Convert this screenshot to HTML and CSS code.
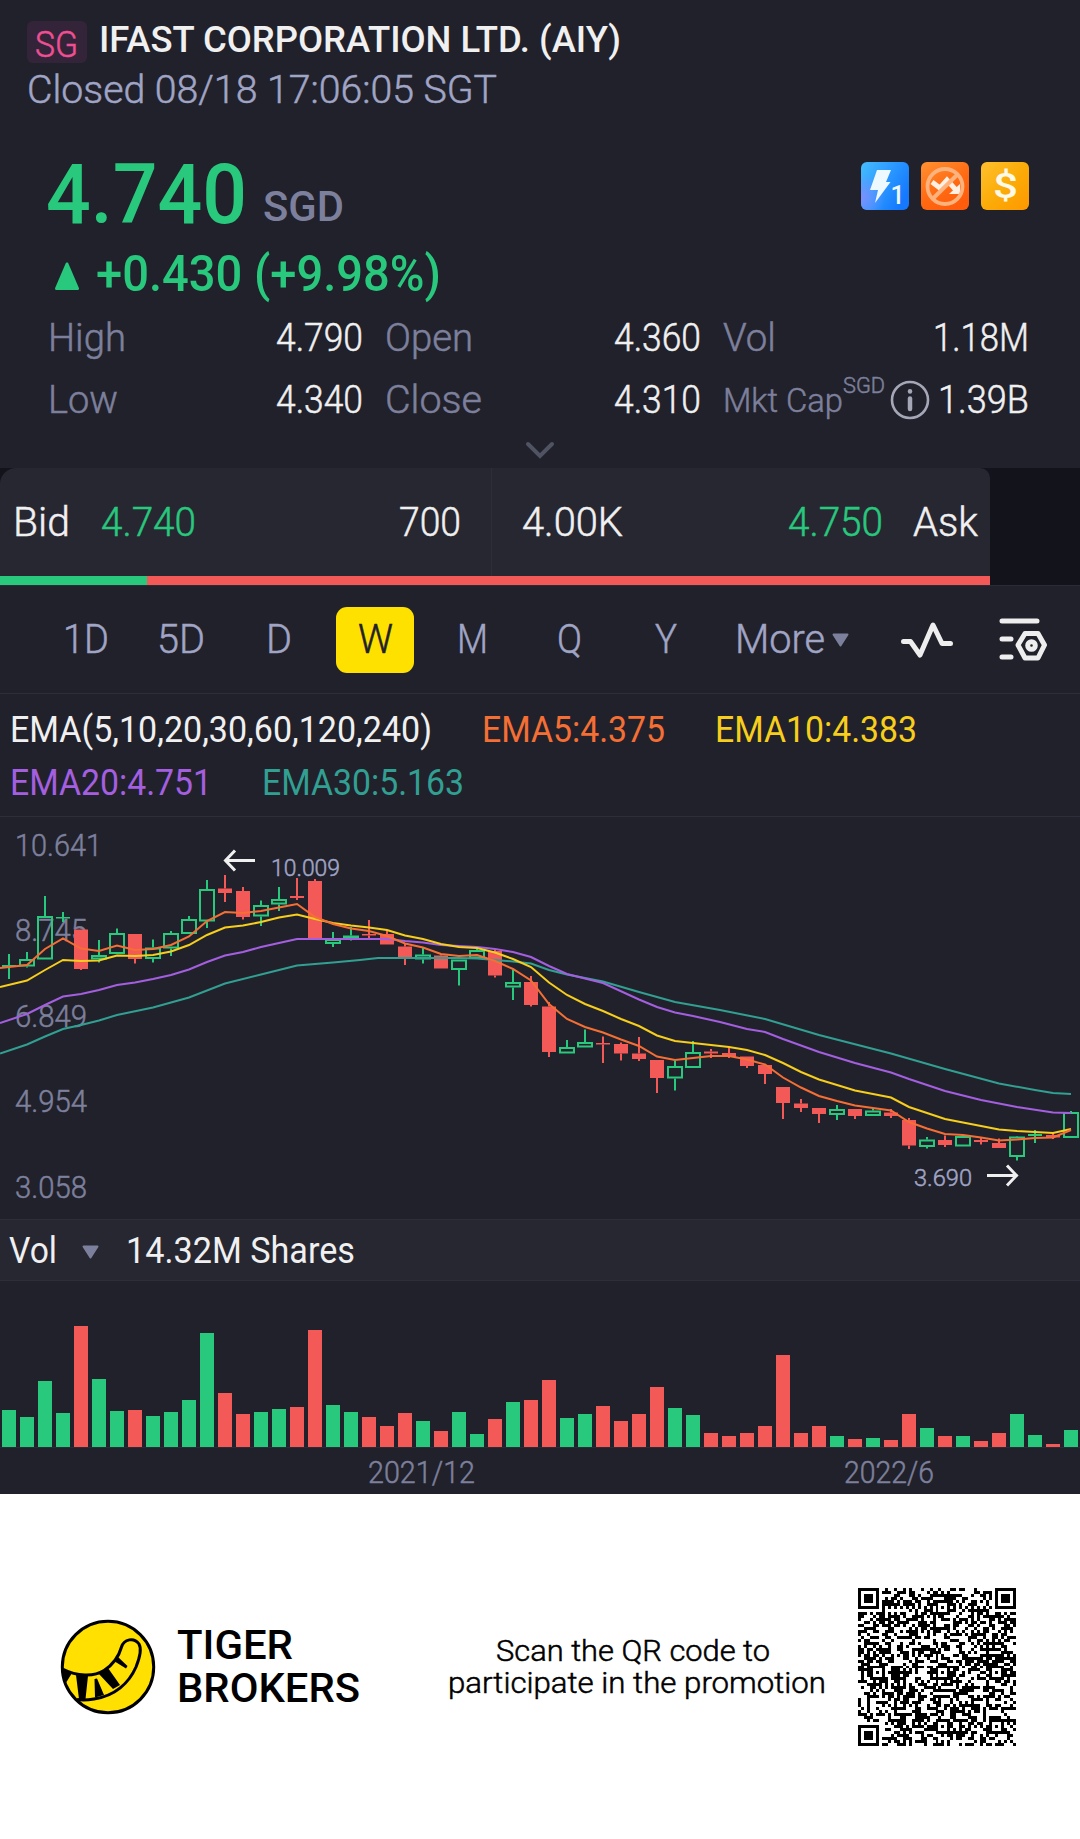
FILE: index.html
```html
<!DOCTYPE html>
<html lang="en">
<head>
<meta charset="utf-8">
<title>IFAST CORPORATION LTD. (AIY)</title>
<link rel="stylesheet" href="styles.css">
</head>
<body>
<main class="quote-page">
  <header class="head">
    <div class="head-title">
      <span class="market thin"><span class="fit" data-w="43">SG</span></span>
      <h1 class="name fit" data-w="522">IFAST CORPORATION LTD. (AIY)</h1>
    </div>
    <div class="status thin"><span class="fit" data-w="470">Closed 08/18 17:06:05 SGT</span></div>
  </header>

  <section class="price">
    <div class="price-row">
      <span class="last fit" data-w="201">4.740</span>
      <span class="ccy fit" data-w="81">SGD</span>
      <div class="tags">
        <svg class="tag" viewBox="0 0 48 48">
          <defs>
            <linearGradient id="blue" x1="0" y1="0" x2="1" y2=".6"><stop offset="0" stop-color="#46bdff"/><stop offset="1" stop-color="#1479ff"/></linearGradient>
            <radialGradient id="violet" cx="0" cy=".75" r=".5"><stop offset="0" stop-color="#7c8fff"/><stop offset="1" stop-color="#7c8fff" stop-opacity="0"/></radialGradient>
          </defs>
          <rect width="48" height="48" rx="6" fill="url(#blue)"/><rect width="48" height="48" rx="6" fill="url(#violet)"/>
          <path d="M16 8H30L25 20H29.500L14 41L17 28H9Z" fill="#eef8ff"/>
          <text class="tag-num" x="29.500" y="42">1</text>
        </svg>
        <svg class="tag" viewBox="0 0 48 48">
          <defs><linearGradient id="orange" x1="0" y1="0" x2=".6" y2="1"><stop offset="0" stop-color="#ff9232"/><stop offset=".6" stop-color="#ff6a12"/><stop offset="1" stop-color="#ff5d0c"/></linearGradient></defs>
          <rect width="48" height="48" rx="6" fill="url(#orange)"/>
          <path d="M11 20L19 26L26 18L35 28" fill="none" stroke="#fff0e3" stroke-width="5"/>
          <path d="M39 22V32H28Z" fill="#fff0e3"/>
          <path d="M11.500 37L37 12" stroke="#ffb27c" stroke-width="4"/>
          <circle cx="24" cy="24.500" r="17.500" fill="none" stroke="#ffb27c" stroke-width="3.800"/>
        </svg>
        <svg class="tag" viewBox="0 0 48 48">
          <defs><linearGradient id="gold" x1="0" y1="0" x2="1" y2="1"><stop offset="0" stop-color="#ffc12f"/><stop offset=".5" stop-color="#fbac08"/><stop offset="1" stop-color="#ff9800"/></linearGradient></defs>
          <rect width="48" height="48" rx="6" fill="url(#gold)"/>
          <text class="tag-dollar" x="24.500" y="36" textLength="25" lengthAdjust="spacingAndGlyphs">$</text>
        </svg>
      </div>
    </div>
    <div class="change">
      <svg class="up" viewBox="0 0 24 28"><path d="M12 2L22.500 26.500H1.500Z"/></svg>
      <span class="fit" data-w="345">+0.430 (+9.98%)</span>
    </div>
    <div class="stats thin">
      <div class="stat"><span class="label fit" data-w="78">High</span><span class="fit" data-w="87">4.790</span></div>
      <div class="stat"><span class="label fit" data-w="88">Open</span><span class="fit" data-w="87">4.360</span></div>
      <div class="stat"><span class="label fit" data-w="53">Vol</span><span class="fit" data-w="96">1.18M</span></div>
      <div class="stat"><span class="label fit" data-w="70">Low</span><span class="fit" data-w="87">4.340</span></div>
      <div class="stat"><span class="label fit" data-w="97">Close</span><span class="fit" data-w="87">4.310</span></div>
      <div class="stat">
        <span class="label cap"><span class="fit" data-w="120">Mkt Cap</span><span class="unit"><span class="fit" data-w="42">SGD</span></span></span>
        <svg class="info" viewBox="0 0 40 40"><circle cx="20" cy="20" r="18"/><path d="M20 18.500V29"/><path d="M20 11.200V11.400"/></svg>
        <span class="fit" data-w="91">1.39B</span>
      </div>
    </div>
    <svg class="chevron" viewBox="0 0 30 18"><path d="M3 3L15 15L27 3"/></svg>
  </section>

  <section class="book">
    <div class="book-panel">
      <div class="book-rows thin">
        <div class="side bid"><span class="fit" data-w="57">Bid</span><span class="green fit" data-w="95">4.740</span><span class="push fit" data-w="62">700</span></div>
        <div class="side ask"><span class="fit" data-w="101">4.00K</span><span class="green push fit" data-w="95">4.750</span><span class="fit" data-w="65">Ask</span></div>
      </div>
      <div class="depth"><i class="depth-bid"></i></div>
    </div>
  </section>

  <nav class="tabs thin">
    <span class="tab"><span class="fit" data-w="46">1D</span></span>
    <span class="tab"><span class="fit" data-w="48">5D</span></span>
    <span class="tab"><span class="fit" data-w="26">D</span></span>
    <span class="tab active"><span class="fit" data-w="35">W</span></span>
    <span class="tab"><span class="fit" data-w="31">M</span></span>
    <span class="tab"><span class="fit" data-w="25">Q</span></span>
    <span class="tab"><span class="fit" data-w="22">Y</span></span>
    <span class="tab more"><span class="fit" data-w="90">More</span><svg class="caret" viewBox="0 0 17 14"><path d="M1.500 1.500H15.500L8.500 12.500Z"/></svg></span>
    <svg class="tool wave" viewBox="0 0 52 38"><path d="M2.500 20.500H9.500L19 34L32 4L41 22.500H49.500"/></svg>
    <svg class="tool prefs" viewBox="0 0 48 46"><path d="M3 4H38M3 22H12M3 40H12"/><path d="M26 16.500H39L45.500 28L39 41H26L19 28Z"/><circle cx="32.500" cy="28.500" r="3.800"/></svg>
  </nav>

  <section class="ema">
    <div class="ema-row"><span class="fit" data-w="422">EMA(5,10,20,30,60,120,240)</span><span class="e5 fit" data-w="183">EMA5:4.375</span><span class="e10 fit" data-w="202">EMA10:4.383</span></div>
    <div class="ema-row"><span class="e20 fit" data-w="202">EMA20:4.751</span><span class="e30 fit" data-w="202">EMA30:5.163</span></div>
  </section>

  <section class="chart">
    <svg id="candles" viewBox="0 7 1080 402" width="1080" height="402"></svg>
  </section>

  <section class="vol-head"><span class="fit" data-w="48">Vol</span><svg class="caret" viewBox="0 0 17 14"><path d="M1.500 1.500H15.500L8.500 12.500Z"/></svg><span class="fit" data-w="229">14.32M Shares</span></section>
  <section class="volume" id="volume"></section>
  <div class="dates thin"><span class="fit" data-w="107">2021/12</span><span class="fit" data-w="90">2022/6</span></div>
</main>

<footer class="promo">
  <svg class="logo" viewBox="0 0 96 96">
    <circle cx="48" cy="48" r="45.700" fill="#ffe000" stroke="#000" stroke-width="3"/>
    <path d="M2.500 50C17 57.500 34 58 44 51.500C54 45 59 37 61.500 28C64 20 74 18 79 25C82 30 80 38 76 48C69 64 55 77 34 80C28 81 22 81.300 17 80.500" fill="none" stroke="#000" stroke-width="3"/>
    <path d="M2.500 50L12 54L6.500 63L3 59ZM16 56L28 57L25.500 80H19ZM34.500 60L37 59.500L44 76L35 78.500ZM39 55L48 49L60 66L53 70ZM54 42L58 38L67.500 47L66 49.500Z"/>
  </svg>
  <div class="brand"><span class="fit" data-w="116">TIGER</span><span class="fit" data-w="183">BROKERS</span></div>
  <div class="scan thin"><span class="scan-first fit" data-w="274">Scan the QR code to</span><span class="fit" data-w="378">participate in the promotion</span></div>
  <svg id="qr" class="qr" viewBox="0 0 53 53" shape-rendering="crispEdges"></svg>
</footer>
<script src="app.js"></script>
</body>
</html>
```
FILE: styles.css
```css
* { box-sizing: border-box; }
body { margin: 0; background: #fff; color: #f0f0f0; font-family: Roboto, "Liberation Sans", sans-serif; font-size: 39px; line-height: 40px; }
svg { display: block; flex: none; }
.quote-page { height: 1494px; background: #21212b; }
.fit { display: inline-block; flex: none; white-space: nowrap; }
.fit-in { display: inline-block; transform-origin: 0 50%; }
.thin { font-weight: 300; -webkit-text-stroke-width: .5px; }
.green { color: #28c87d; }
.push { margin-left: auto; }

.head { height: 152px; padding: 21px 27px 0; }
.head-title { display: flex; gap: 12px; height: 49px; }
.market { width: 60px; height: 42px; padding: 4px 0 0 8px; border-radius: 6px; background: #34243a; color: #f04f94; font-size: 36px; }
.name { margin: 0; font-size: 37px; font-weight: 500; line-height: 37px; }
.status { color: #a0a5c5; }

.price { height: 316px; padding: 0 51px 0 46px; }
.price-row { display: flex; align-items: center; height: 84px; }
.last { color: #28c87d; font-size: 84px; font-weight: 500; line-height: 88px; }
.last .fit-in { padding-top: 1px; }
.ccy { margin: 23px 0 0 16px; color: #7d809c; font-size: 43px; font-weight: 500; }
.tags { display: flex; gap: 12px; margin: -16px 0 0 auto; }
.tag { width: 48px; height: 48px; }
.tag-num { fill: #eef8ff; font-size: 25px; font-weight: 500; }
.tag-dollar { fill: #fff9e8; font-size: 35px; font-weight: 500; text-anchor: middle; }
.change { display: flex; align-items: center; gap: 17px; height: 71px; padding: 4px 0 0 9px; color: #28c87d; font-size: 50px; font-weight: 500; line-height: 60px; }
.up { width: 24px; height: 28px; margin-top: 5px; fill: #28c87d; stroke: #28c87d; stroke-width: 3; stroke-linejoin: round; }
.stats { display: grid; grid-template-columns: 315px 316px 306px; grid-auto-rows: 62px; column-gap: 22px; margin: 0 -1px 0 2px; }
.stat { display: flex; align-items: center; justify-content: space-between; font-size: 38px; }
.label { color: #7d809c; font-size: 39px; }
.cap { display: flex; font-size: 34px; }
.unit { font-size: 22px; line-height: 12px; }
.info { width: 40px; height: 40px; margin-left: -3px; fill: none; stroke: #a5a7b6; stroke-width: 2.6; }
.info path { stroke-width: 4.5; stroke-linecap: round; }
.chevron { width: 30px; height: 18px; margin: 10px auto 0; position: relative; left: 2px; fill: none; stroke: #505362; stroke-width: 4; stroke-linecap: round; }

.book { height: 118px; background: #13131c; border-bottom: 1px solid #2b2b38; }
.book-panel { width: 990px; height: 117px; border-radius: 16px 10px 0 0; background: #272732; overflow: hidden; }
.book-rows { display: grid; grid-template-columns: 492px 498px; height: 108px; }
.side { display: flex; align-items: center; padding-top: 2px; font-size: 40px; }
.bid { gap: 31px; padding-left: 13px; padding-right: 30px; border-right: 1px solid #2e2e3b; }
.ask { gap: 30px; padding-left: 30px; padding-right: 12px; }
.depth { height: 9px; background: #f25957; }
.depth-bid { display: block; width: 147px; height: 9px; background: #28c87d; }

.tabs { display: grid; grid-template-columns: 86px 104px 91px 102px 92px 102px 92px 160px 1fr auto; align-items: center; height: 108px; padding: 0 33px 0 43px; border-bottom: 1px solid #2e2e3b; color: #a0a5c5; font-size: 40px; }
.tab { display: flex; justify-content: center; }
.active { justify-self: center; align-items: center; width: 78px; height: 66px; border-radius: 11px; background: #ffe100; color: #21212b; }
.more { align-items: center; gap: 7px; }
.caret { width: 17px; height: 14px; fill: #7d809c; stroke: #7d809c; stroke-width: 2; stroke-linejoin: round; }
.tool { fill: none; stroke: #eee; stroke-width: 5; stroke-linecap: round; stroke-linejoin: round; }
.wave { width: 52px; height: 38px; margin-left: 29px; }
.prefs { width: 48px; height: 46px; }

.ema { height: 123px; padding: 10px 10px 0; border-bottom: 1px solid #2e2e3b; font-size: 36px; }
.ema-row { display: flex; gap: 50px; height: 53px; line-height: 53px; }
.e5 { color: #f56f34; } .e10 { color: #f6ce1b; } .e20 { color: #a45fe0; } .e30 { color: #319f91; }

.chart { height: 402px; }
.chart text { font-weight: 300; fill: #7d809c; stroke: #7d809c; stroke-width: .5; font-size: 31px; }
.chart .mark { fill: #a0a5c5; stroke: #a0a5c5; font-size: 24px; }
.line { fill: none; stroke-width: 2; }
.arrow { fill: none; stroke: #f0f0f0; stroke-width: 3; }

.vol-head { display: flex; align-items: center; height: 62px; padding: 2px 0 0 9px; background: #272732; border: solid #2e2e3b; border-width: 1px 0; font-size: 36px; }
.vol-head .caret { margin: 2px 27px 0 25px; }
.volume { display: flex; align-items: flex-end; gap: 4px; height: 167px; padding: 0 2px; border-bottom: 1px solid #2b2b38; }
.volume i { flex: none; width: 14px; }
.rise { background: #28c87d; } .fall { background: #f25957; }
.dates { display: flex; gap: 369px; height: 46px; padding: 5px 0 0 368px; color: #7d809c; font-size: 31px; }

.promo { display: flex; align-items: center; height: 345px; padding: 0 64px 0 60px; color: #000; }
.logo { width: 96px; height: 96px; }
.brand { display: flex; flex-direction: column; margin-left: 21px; font-size: 40px; font-weight: 500; line-height: 43px; }
.scan { display: flex; flex-direction: column; align-items: center; width: 378px; margin-left: 88px; font-size: 29px; line-height: 32px; }
.scan-first { margin-right: 8px; }
.qr { width: 158px; height: 158px; margin-left: auto; }
```
FILE: app.js
```js
// Condense each label to its column width.
document.querySelectorAll('.fit').forEach(function (el) {
  var inner = document.createElement('span');
  inner.className = 'fit-in';
  inner.textContent = el.textContent;
  el.textContent = '';
  el.appendChild(inner);
  var natural = inner.getBoundingClientRect().width;
  el.style.width = el.dataset.w + 'px';
  inner.style.transform = 'scaleX(' + el.dataset.w / natural + ')';
});

var GREEN = '#28c87d', RED = '#f25957';

// direction, high, body top, body bottom, low, volume
var weeks = [
['g',144,155,157,169,37],['g',142,149,156.5,157.5,30],['g',86,106,149.5,149.5,66],['g',102,107,108,112,34],['r',119.5,119.5,159,160,121],
['g',130,145,149.5,152.5,68],['g',118.5,123,144,144,36],['r',124,124,149,153.5,37],['g',129.5,137.5,149,152.5,31],['g',121,123,138.5,146,35],
['g',106,109,124,124,47],['g',70,79,111.5,118,114],['r',65,78.5,83,92,54],['r',77,81,107,109.5,33],['g',90.5,95,106.5,116,35],
['g',77,89,94.5,101,38],['r',68,86,88,90,40],['r',69,71,129,129,117],['g',122,129,134,137,42],['g',117,125.5,128,130.5,35],
['r',110,124,125.5,128,30],['r',120.5,124,134.5,134.5,21],['r',133,136.5,147,155,34],['g',137.5,144.5,149.5,153.5,26],['r',144,145.5,158.5,158.5,16],
['g',149.5,149.5,160,175.5,35],['g',138,140,148.5,148.5,13],['r',139.5,141,165.5,167.5,28],['g',159.5,172,177.5,190,45],['r',166,172,195,196.5,47],
['r',192,196.5,242,247,67],['g',230,237,243.5,243.5,29],['g',219.5,232,237.5,237.5,33],['r',226.5,233,234.5,253,41],['r',232.5,234,243.5,250.5,26],
['r',227,243.5,249,251,33],['r',250,250,268,283,60],['g',250.5,256,268.5,280.5,39],['g',231,242,258,258,32],['r',239,241.5,243.5,248,14],
['r',237.5,243,247,248,11],['r',246.5,246.5,256,258,14],['r',255,255,264,274,21],['r',277,277,293,309,92],['r',289,293.5,298,302,14],
['r',298,298,304,313,21],['g',295,299,305,310,11],['r',299,299,306,309,8],['g',298,300.5,306,306,9],['r',299,302.5,306,308,7],
['r',308,310,335.5,339,33],['g',327,329.5,337,338.5,19],['r',325.5,330,335,337,11],['g',324.5,326,336.5,336.5,11],['r',327,330,332,334.5,6],
['r',328.5,333,338,338,14],['g',326,326.5,347,350.5,33],['g',320,324,326,333,12],['r',322.5,325,327.5,329,3],['g',301,302,328,328,17]];

var svg = '';
[['10.641',15,46,87],['8.745',15,131,72],['6.849',15,217,72],['4.954',15,302,72],['3.058',15,388,72]].forEach(function (t) {
  svg += '<text x="' + t[1] + '" y="' + t[2] + '" textLength="' + t[3] + '" lengthAdjust="spacingAndGlyphs">' + t[0] + '</text>';
});
weeks.forEach(function (w, i) {
  var x = 9 + 18 * i, c = w[0] === 'g' ? GREEN : RED;
  svg += '<path stroke="' + c + '" stroke-width="2" d="M' + x + ' ' + w[1] + 'V' + w[2] + 'M' + x + ' ' + w[3] + 'V' + w[4] + '"/>';
  if (w[0] === 'r' || w[3] - w[2] < 2.1) {
    svg += '<rect x="' + (x - 7) + '" y="' + w[2] + '" width="14" height="' + Math.max(1.5, w[3] - w[2]) + '" fill="' + c + '"/>';
  } else {
    svg += '<rect x="' + (x - 7) + '" y="' + (w[2] + 1) + '" width="14" height="' + Math.max(1, w[3] - w[2] - 2) + '" fill="none" stroke="' + c + '" stroke-width="2"/>';
  }
});
var lines = {
'#319f91': '0,243.5 27,234.5 45,226.5 63,219 81,215 99,210.5 117,205 153,197.5 189,187.5 225,173.5 261,164.5 297,155.5 333,152.5 360,150 378,148 459,148 477,148.5 495,150 513,151.5 531,153.5 549,160 567,164.5 603,171.5 639,182 675,192 720,200 765,209 819,225 891,243.5 945,259 999,273.5 1035,280 1053,283 1071,284',
'#a45fe0': '0,213 27,204 45,195 63,186.5 81,184 99,180 117,175 135,172.5 153,169 171,165 189,159.5 207,152 225,145.5 243,142 261,137 279,133 297,129 387,129 405,131 423,132.5 441,135 459,136 477,137 495,139 513,142 531,147 549,156 567,164 603,173 639,189.5 657,197 675,202.5 693,206 720,212 747,219 765,222 783,229 819,242 855,253 891,262.5 909,269 945,281 981,290 1017,297 1053,302.5 1071,303',
'#f6ce1b': '0,177 27,170.5 45,160 63,150 81,151 99,150.5 117,145.5 135,146 153,145 171,141.5 189,135 207,125 225,117.5 243,115.5 261,112 279,107.5 297,104.5 315,109 333,113 351,115.5 369,117.5 387,120 405,125.5 423,129 441,134 459,137 477,138 495,142.5 513,149 531,157 549,172.5 567,185 585,194 603,201 621,209 639,216 657,225.5 675,231 693,233 711,235 729,237 747,240 765,245 783,253 801,262 819,269.5 837,275 855,280.5 873,284 891,287.5 909,297 927,303 945,309 963,312.5 981,316 999,319.5 1017,321 1035,322 1053,323 1071,319',
'#f56f34': '0,158 9,157 27,155 45,139 63,128.5 81,138.5 99,141 117,135.5 135,140 153,139 171,135 189,126.5 207,111 225,102 243,103 261,101 279,97.5 297,94 315,107 333,114 351,118.5 369,121 387,126 405,133.5 423,137.5 441,144 459,146 477,145 495,151 513,159 531,170.5 549,194 567,209 585,217 603,222.5 621,229.5 639,236 657,246.5 675,250 693,248 711,246 729,246 747,249.5 765,254.5 783,267.5 801,277.5 819,286 837,291 855,295.5 873,298 891,300.5 909,312 927,318.5 945,324 963,325 981,327.5 999,330.5 1017,329.5 1035,328 1053,327.5 1071,320'
};
Object.keys(lines).forEach(function (c) { svg += '<polyline class="line" stroke="' + c + '" points="' + lines[c] + '"/>'; });
svg += '<text class="mark" x="271" y="66" textLength="69" lengthAdjust="spacingAndGlyphs">10.009</text>' +
  '<text class="mark" x="914" y="376" textLength="58" lengthAdjust="spacingAndGlyphs">3.690</text>' +
  '<path class="arrow" d="M255 50.500H225.500M235 40.500L225.500 50.500L235 60.500M987 365.500H1016.500M1007 355.500L1016.500 365.500L1007 375.500"/>';
document.getElementById('candles').innerHTML = svg;

document.getElementById('volume').innerHTML = weeks.map(function (w) {
  return '<i class="' + (w[0] === 'g' ? 'rise' : 'fall') + '" style="height:' + w[5] + 'px"></i>';
}).join('');

// QR symbol: finder, timing and alignment patterns around the data modules.
var N = 53, seed = 20220818, d = '';
function dist(x, y, cx, cy) { return Math.max(Math.abs(x - cx), Math.abs(y - cy)); }
for (var y = 0; y < N; y++) for (var x = 0; x < N; x++) {
  seed = (seed * 1103515 + 12345) % 2147483648;
  var on = (seed / 65536 | 0) % 100 < 51;
  if (x === 6) on = y % 2 === 0;
  if (y === 6) on = x % 2 === 0;
  [[6, 28], [28, 6], [28, 28], [28, 46], [46, 28], [46, 46]].forEach(function (a) {
    if (dist(x, y, a[0], a[1]) <= 2) on = dist(x, y, a[0], a[1]) !== 1;
  });
  [[3, 3], [N - 4, 3], [3, N - 4]].forEach(function (f) {
    var q = dist(x, y, f[0], f[1]);
    if (q <= 4) on = q < 2 || q === 3;
  });
  if (on) d += 'M' + x + ' ' + y + 'h1v1h-1z';
}
document.getElementById('qr').innerHTML = '<path d="' + d + '"/>';
```
